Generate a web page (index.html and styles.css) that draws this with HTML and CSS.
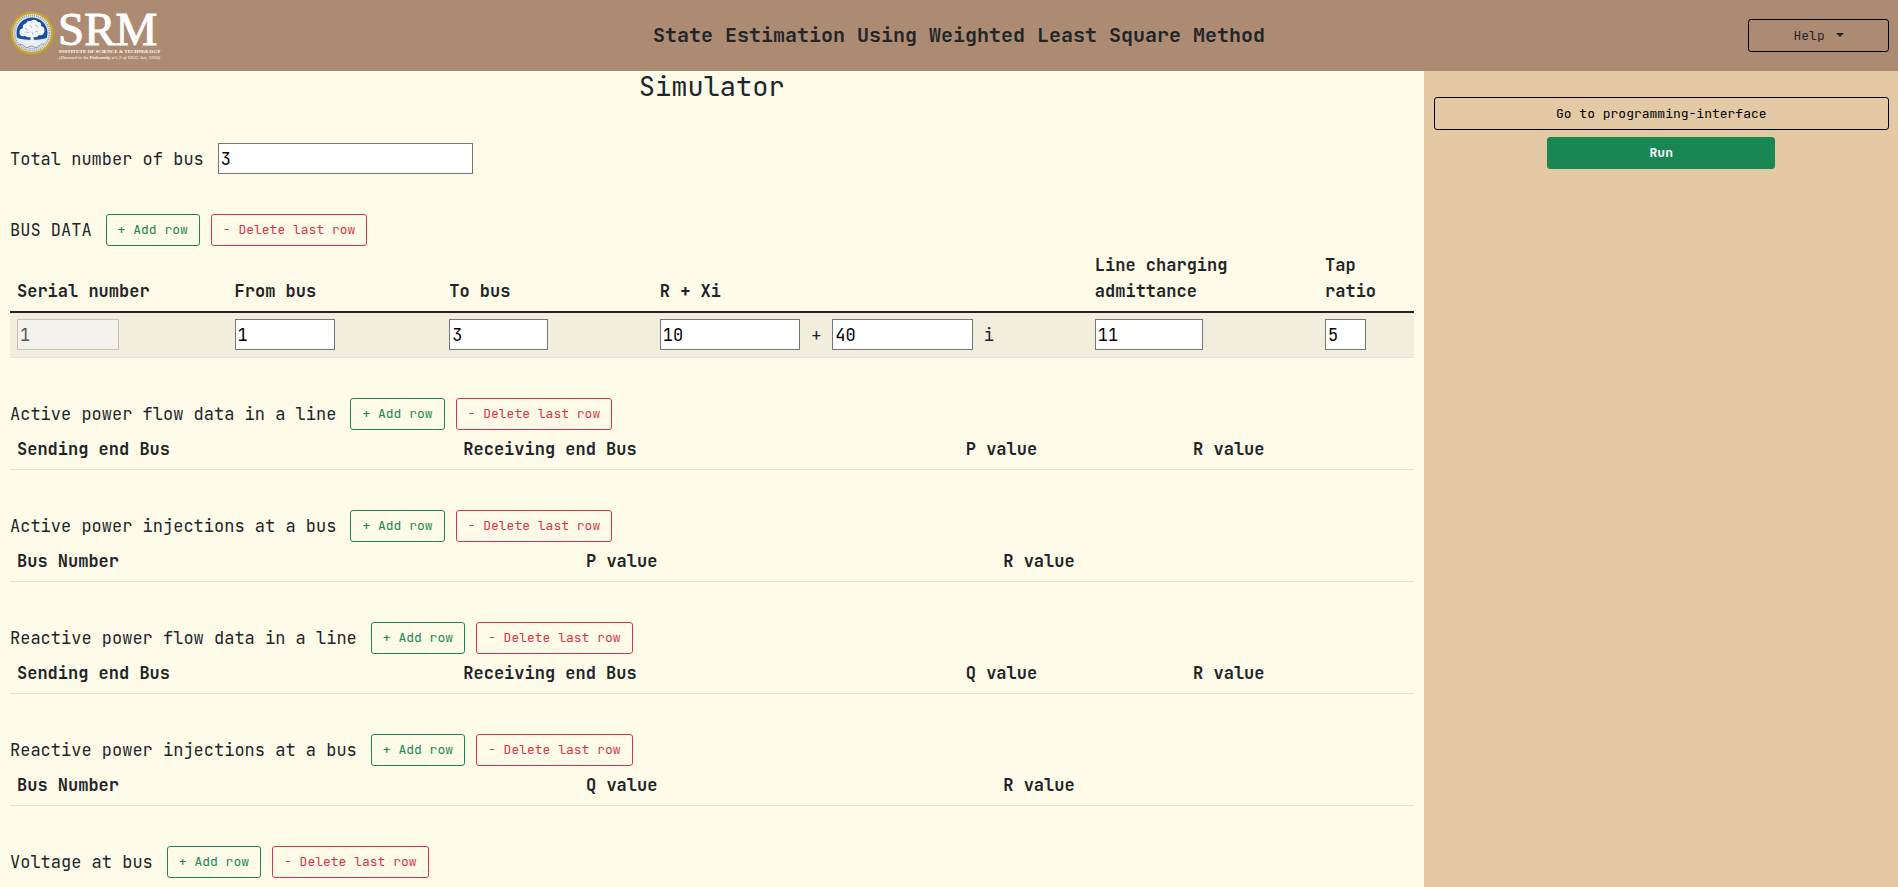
FILE: index.html
```html
<!DOCTYPE html>
<html lang="en">
<head>
<meta charset="utf-8">
<title>State Estimation Using Weighted Least Square Method</title>
<link rel="stylesheet" href="styles.css">
</head>
<body>
<header class="topbar">
  <a class="brand" href="#" aria-label="SRM Institute of Science and Technology">
    <svg class="logo" viewBox="0 0 160 52" width="160" height="52">
      <circle cx="22" cy="23" r="21.5" fill="#c9a62c"/>
      <circle cx="22" cy="23" r="19" fill="#e9e6dc"/>
      <circle cx="22" cy="23" r="17.500" fill="none" stroke="#8fa0bf" stroke-width="2" stroke-dasharray="1 1"/>
      <circle cx="22" cy="23" r="15.5" fill="#1450a3"/>
      <path d="M6.500 28Q22 32 37.500 28Q33 38.500 22 38.500Q11 38.500 6.500 28Z" fill="#e9edf3"/>
      <path d="M20.500 31L20.500 27Q17 28 15 26Q9 27 9.500 22Q9.500 19 13 18Q12 14 16 13.500Q17 10 21 11Q25 8 28 12Q32 12 31 16Q35 17 34.500 21Q34 26 29 25Q27 28 23.500 27L24 31L28 33L16 33Z" fill="#f3f5f8"/>
      <path d="M15 18l3 2M25 15l3 2M20 15l2 3M28 21l-3 1M16 22l3 1M22 22l1 3" stroke="#a9bddc" stroke-width="1"/>
      <path d="M9 35q3-2 5 1t5 1 5 0 5-1 5-2" fill="none" stroke="#8797ad" stroke-width="1"/>
      <text class="logo-name" x="48" y="35">SRM</text>
      <text class="logo-line" x="49" y="43">INSTITUTE OF SCIENCE &amp; TECHNOLOGY</text>
      <text class="logo-note" x="49" y="49">(Deemed to be <tspan class="logo-strong">University</tspan> u/s 3 of UGC Act, 1956)</text>
    </svg>
  </a>
  <h1 class="title">State Estimation Using Weighted Least Square Method</h1>
  <button class="btn btn-help" type="button">Help <span class="caret"></span></button>
</header>

<div class="layout">
  <main class="main">
    <h2 class="heading">Simulator</h2>

    <div class="bar bar-total">
      <label class="label" for="total">Total number of bus</label>
      <input class="field field-total" id="total" type="text" value="3">
    </div>

    <section class="section">
      <div class="bar">
        <h3 class="label">BUS DATA</h3>
        <button class="btn btn-add" type="button">+ Add row</button>
        <button class="btn btn-delete" type="button">- Delete last row</button>
      </div>
      <table class="table table-bus">
        <colgroup><col class="c-serial"><col class="c-from"><col class="c-to"><col class="c-rx"><col class="c-line"><col class="c-tap"></colgroup>
        <thead>
          <tr><th scope="col">Serial number</th><th scope="col">From bus</th><th scope="col">To bus</th><th scope="col">R + Xi</th><th scope="col">Line charging admittance</th><th scope="col">Tap ratio</th></tr>
        </thead>
        <tbody>
          <tr>
            <td><input class="field field-half" type="text" value="1" aria-label="Serial number" disabled></td>
            <td><input class="field field-half" type="text" value="1" aria-label="From bus"></td>
            <td><input class="field field-half" type="text" value="3" aria-label="To bus"></td>
            <td><div class="complex"><input class="field field-third" type="text" value="10" aria-label="R"><span>+</span><input class="field field-third" type="text" value="40" aria-label="X"><span>i</span></div></td>
            <td><input class="field field-half" type="text" value="11" aria-label="Line charging admittance"></td>
            <td><input class="field field-half" type="text" value="5" aria-label="Tap ratio"></td>
          </tr>
        </tbody>
      </table>
    </section>

    <section class="section">
      <div class="bar">
        <h3 class="label">Active power flow data in a line</h3>
        <button class="btn btn-add" type="button">+ Add row</button>
        <button class="btn btn-delete" type="button">- Delete last row</button>
      </div>
      <table class="table">
        <colgroup><col class="c-send"><col class="c-receive"><col class="c-value"><col class="c-value"></colgroup>
        <thead><tr><th scope="col">Sending end Bus</th><th scope="col">Receiving end Bus</th><th scope="col">P value</th><th scope="col">R value</th></tr></thead>
      </table>
    </section>

    <section class="section">
      <div class="bar">
        <h3 class="label">Active power injections at a bus</h3>
        <button class="btn btn-add" type="button">+ Add row</button>
        <button class="btn btn-delete" type="button">- Delete last row</button>
      </div>
      <table class="table">
        <colgroup><col class="c-number"><col class="c-wide"><col class="c-wide"></colgroup>
        <thead><tr><th scope="col">Bus Number</th><th scope="col">P value</th><th scope="col">R value</th></tr></thead>
      </table>
    </section>

    <section class="section">
      <div class="bar">
        <h3 class="label">Reactive power flow data in a line</h3>
        <button class="btn btn-add" type="button">+ Add row</button>
        <button class="btn btn-delete" type="button">- Delete last row</button>
      </div>
      <table class="table">
        <colgroup><col class="c-send"><col class="c-receive"><col class="c-value"><col class="c-value"></colgroup>
        <thead><tr><th scope="col">Sending end Bus</th><th scope="col">Receiving end Bus</th><th scope="col">Q value</th><th scope="col">R value</th></tr></thead>
      </table>
    </section>

    <section class="section">
      <div class="bar">
        <h3 class="label">Reactive power injections at a bus</h3>
        <button class="btn btn-add" type="button">+ Add row</button>
        <button class="btn btn-delete" type="button">- Delete last row</button>
      </div>
      <table class="table">
        <colgroup><col class="c-number"><col class="c-wide"><col class="c-wide"></colgroup>
        <thead><tr><th scope="col">Bus Number</th><th scope="col">Q value</th><th scope="col">R value</th></tr></thead>
      </table>
    </section>

    <section class="section">
      <div class="bar">
        <h3 class="label">Voltage at bus</h3>
        <button class="btn btn-add" type="button">+ Add row</button>
        <button class="btn btn-delete" type="button">- Delete last row</button>
      </div>
    </section>
  </main>

  <aside class="side">
    <button class="btn btn-outline" type="button">Go to programming-interface</button>
    <button class="btn btn-run" type="button">Run</button>
  </aside>
</div>
</body>
</html>
```

FILE: styles.css
```css
* {
  box-sizing: border-box;
}

body {
  margin: 0;
  min-height: 100vh;
  display: flex;
  flex-direction: column;
  background: #fffbe9;
  color: #212529;
  font-family: "JetBrains Mono", "DejaVu Sans Mono", monospace;
  font-size: 17px;
  line-height: 26px;
}

.topbar {
  display: grid;
  grid-template-columns: 160px 1fr 141px;
  align-items: center;
  min-height: 71px;
  padding: 0 9px 0 10px;
  background: #ad8b73;
}

.brand,
.logo {
  display: block;
}

.logo {
  overflow: visible;
}

.logo-name,
.logo-line,
.logo-note {
  fill: #fff;
  font-family: "Liberation Serif", serif;
}

.logo-name {
  font-size: 47px;
  stroke: #fff;
  stroke-width: 1px;
}

.logo-line {
  font-size: 5px;
  font-weight: 700;
}

.logo-note {
  font-size: 5px;
  font-style: italic;
}

.logo-strong {
  font-weight: 700;
}

.title {
  margin: 0;
  padding-bottom: 2px;
  font-size: 20px;
  font-weight: 700;
  text-align: center;
}

.layout {
  flex: 1;
  display: grid;
  grid-template-columns: 3fr 1fr;
}

.main {
  padding: 0 10px 8px;
}

.heading {
  margin: 0;
  font-size: 27px;
  font-weight: 400;
  line-height: 30px;
  text-align: center;
}

.bar {
  display: flex;
  align-items: center;
  gap: 11px;
}

.bar-total {
  margin: 42px 0 40px;
}

.label {
  margin: 0 3px 0 0;
  font-size: 17px;
  font-weight: 400;
}

.section {
  margin-bottom: 40px;
}

.section:last-child {
  margin-bottom: 0;
}

.btn {
  min-height: 32px;
  padding: 0 11px;
  border: 1px solid #000;
  border-radius: 3px;
  background: transparent;
  color: #000;
  font-family: inherit;
  font-size: 13px;
  line-height: 20px;
  cursor: pointer;
}

.btn-add {
  border-color: #198754;
  color: #198754;
}

.btn-delete {
  border-color: #dc3545;
  color: #dc3545;
}

.btn-help,
.btn-outline {
  min-height: 33px;
}

.btn-help {
  color: #212529;
}

.caret {
  display: inline-block;
  margin-left: 3px;
  vertical-align: 3px;
  border-top: 4px solid;
  border-right: 4px solid transparent;
  border-left: 4px solid transparent;
}

.btn-run {
  width: 50%;
  border-color: #198754;
  background: #198754;
  color: #fff;
  font-weight: 700;
}

.field {
  height: 31px;
  padding: 1px 2px;
  border: 1px solid #767676;
  border-radius: 0;
  background: #fff;
  color: #000;
  font-family: inherit;
  font-size: 17px;
}

.field:disabled {
  border-color: #c8c6bb;
  background: #f4f2ec;
  color: #545454;
}

.field-total {
  width: 255px;
}

.field-half {
  display: block;
  width: 50%;
}

.field-third {
  width: 33.33%;
}

.complex {
  display: flex;
  align-items: center;
  gap: 11px;
}

.table {
  width: 100%;
  table-layout: fixed;
  border-spacing: 0;
}

.table th,
.table td {
  padding: 6px 7px 7px;
  border-bottom: 1px solid #dee2e6;
  text-align: left;
  vertical-align: bottom;
}

.table-bus th {
  border-bottom: 2px solid #212529;
}

.table-bus td {
  background: #f2eede;
}

.c-serial { width: 15.5%; }
.c-from { width: 15.3%; }
.c-to { width: 15%; }
.c-rx { width: 31%; }
.c-line { width: 16.4%; }
.c-tap { width: 6.8%; }
.c-send { width: 31.8%; }
.c-receive { width: 35.8%; }
.c-value { width: 16.2%; }
.c-number { width: 40.5%; }
.c-wide { width: 29.7%; }

.side {
  display: flex;
  flex-direction: column;
  align-items: center;
  gap: 7px;
  padding: 26px 9px 0 10px;
  background: #e3caa5;
}

.btn-outline {
  width: 100%;
}
```
